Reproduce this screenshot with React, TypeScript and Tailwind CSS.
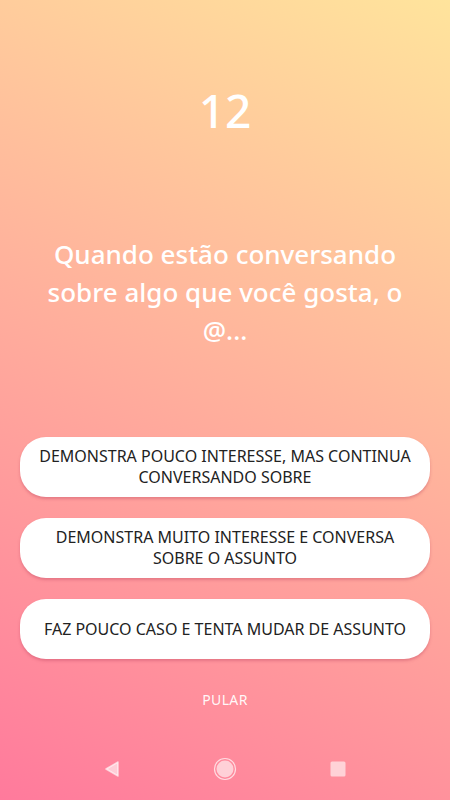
import React from 'react';

const options = [
  'DEMONSTRA POUCO INTERESSE, MAS CONTINUA CONVERSANDO SOBRE',
  'DEMONSTRA MUITO INTERESSE E CONVERSA SOBRE O ASSUNTO',
  'FAZ POUCO CASO E TENTA MUDAR DE ASSUNTO',
];

export default function App() {
  return (
    <div
      className="relative flex h-[800px] w-[450px] flex-col items-center overflow-hidden bg-[linear-gradient(27deg,#ff7a9c_0%,#ffe49c_100%)] text-white"
      style={{ fontFamily: '"Noto Sans", "Open Sans", sans-serif' }}
    >
      {/* Counter */}
      <div className="mt-[80px] text-[46px] font-medium leading-[60px]">12</div>

      {/* Question */}
      <h1 className="mt-[95px] px-[40px] text-center text-[26px] font-medium leading-[38px]">
        Quando estão conversando sobre algo que você gosta, o @...
      </h1>

      {/* Options */}
      <div className="mt-[88px] flex w-full flex-col gap-[21px] px-[20px]">
        {options.map(o => (
          <button
            key={o}
            className="flex h-[60px] w-full items-center justify-center rounded-[26px] bg-white px-[18px] text-center text-[16px] leading-[21px] text-[#222] shadow-[0_2px_3px_rgba(180,60,90,0.35)]"
          >
            {o}
          </button>
        ))}
      </div>

      <button className="mt-[30px] text-[14px] tracking-wide text-white/95">PULAR</button>

      {/* Android nav */}
      <div className="absolute bottom-0 left-0 flex h-[60px] w-full items-center justify-between px-[104px] pb-[2px]">
        <svg width="16" height="18" viewBox="0 0 16 18">
          <path d="M14 2 L2 9 L14 16 Z" fill="rgba(255,255,255,0.6)" stroke="rgba(255,255,255,0.6)" strokeWidth="1.5" strokeLinejoin="round" />
        </svg>
        <svg width="24" height="24" viewBox="0 0 24 24">
          <circle cx="12" cy="12" r="10.5" fill="none" stroke="rgba(255,255,255,0.7)" strokeWidth="1.2" />
          <circle cx="12" cy="12" r="8.5" fill="rgba(255,255,255,0.6)" />
        </svg>
        <svg width="16" height="16" viewBox="0 0 16 16">
          <rect x="0.5" y="0.5" width="15" height="15" rx="1.5" fill="rgba(255,255,255,0.6)" />
        </svg>
      </div>
    </div>
  );
}
